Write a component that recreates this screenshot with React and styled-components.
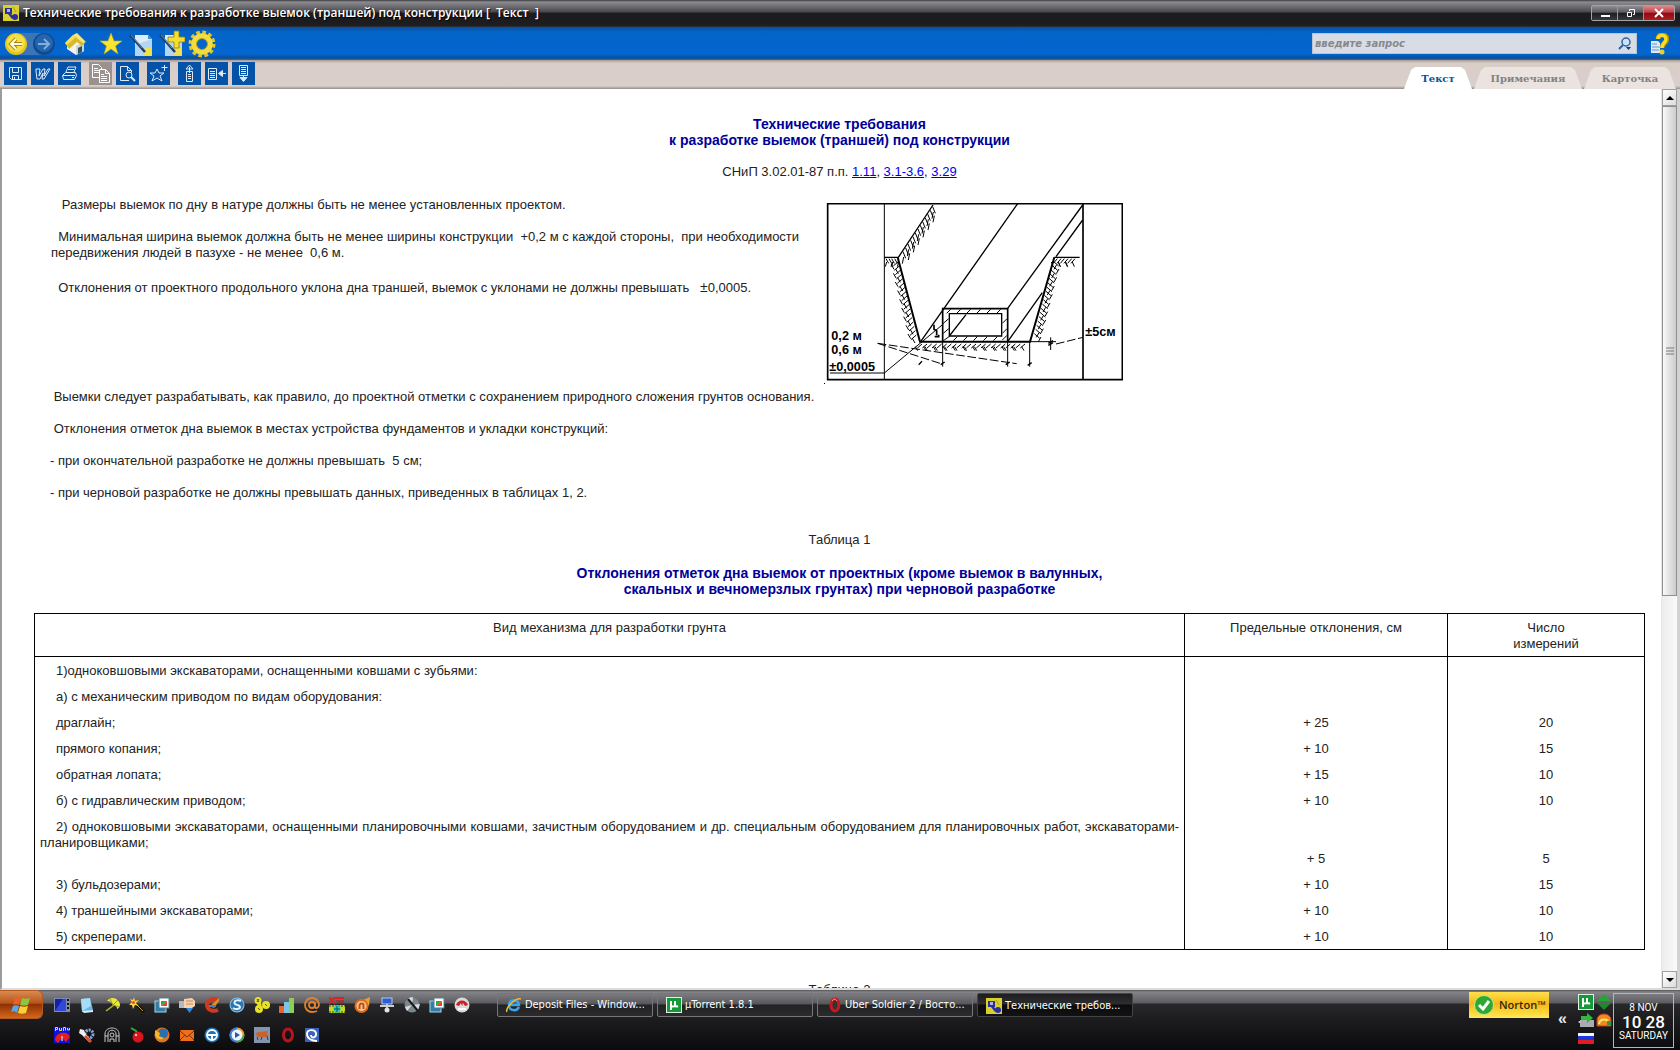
import styled, { createGlobalStyle } from "styled-components";

const GlobalStyle = createGlobalStyle`
  * {
    box-sizing: border-box;
  }

  body {
    margin: 0;
    background: #fff;
    font-family: "Liberation Sans", Arial, sans-serif;
    font-size: 13px;
    line-height: 16px;
    color: #222;
  }

  button {
    margin: 0;
    padding: 0;
    border: 0;
    background: none;
    font: inherit;
    color: inherit;
  }

  svg {
    display: block;
  }
`;

const Desktop = styled.div`
  display: flex;
  flex-direction: column;
  height: 100vh;
  overflow: hidden;
`;

const TitleBar = styled.header`
  display: flex;
  align-items: center;
  flex: none;
  height: 27px;
  padding: 0 5px 2px 3px;
  background: linear-gradient(
    #3c3c40 0,
    #8c8b90 2px,
    #6a696e 7px,
    #48474b 12px,
    #1c1c1f 13px,
    #1d1d20 25px,
    #26323f 27px
  );
`;

const Title = styled.h1`
  flex: 1;
  margin: 0 0 0 4px;
  font-family: "Open Sans", sans-serif;
  font-size: 12px;
  font-weight: 600;
  line-height: 18px;
  color: #fff;
  text-shadow: 1px 1px 1px #000;
  white-space: pre;
`;

const WindowButtons = styled.div`
  display: flex;
  border: 1px solid #a5a5a8;
  border-radius: 2px;
`;

const WindowButton = styled.button`
  display: grid;
  place-items: center;
  width: ${(props) => (props.$close ? "30px" : "26px")};
  height: 14px;
  border-right: ${(props) => (props.$close ? "0" : "1px solid #98989b")};
  background: ${(props) =>
    props.$close
      ? "linear-gradient(#d98b8b, #c04048 45%, #8e0b14 50%, #b01c22)"
      : "linear-gradient(#8f8f93, #5a5a5e 45%, #1d1d20 50%, #3a3a3d)"};
`;

const MainBar = styled.div`
  display: flex;
  align-items: center;
  flex: none;
  height: 33px;
  padding: 0 11px 0 5px;
  background: linear-gradient(#0b4f9f 0, #0363c9 5px, #0466cf 27px, #034f9f 31px, #5d6472 33px);
`;

const IconButton = styled.button`
  margin-right: ${(props) => props.$gap || 0}px;
`;

const Search = styled.form`
  display: flex;
  align-items: center;
  width: 325px;
  height: 21px;
  margin: 0 14px 0 auto;
  padding-right: 4px;
  border: 1px solid #b9c3d2;
  background: #d7dce5;
`;

const SearchInput = styled.input`
  flex: 1;
  min-width: 0;
  padding: 0 2px;
  border: 0;
  outline: 0;
  background: none;
  font-family: "DejaVu Sans", sans-serif;
  font-size: 10px;
  font-style: italic;
  font-weight: bold;

  &::placeholder {
    color: #88888e;
    opacity: 1;
  }
`;

const ToolBar = styled.div`
  display: flex;
  align-items: flex-start;
  flex: none;
  gap: 8px;
  height: 29px;
  padding: 2px 4px 0;
  background: linear-gradient(#a89792 0, #d9cdc8 3px, #d9cfcb 26px, #958b87 29px);
`;

const ToolGroup = styled.div`
  display: flex;
  gap: 4px;
`;

const ToolButton = styled.button`
  display: grid;
  place-items: center;
  width: 23px;
  height: 23px;
  background: ${(props) => (props.$gray ? "#9b918d" : "#0453a8")};
`;

const Tabs = styled.nav`
  display: flex;
  gap: 2px;
  margin: 5px 0 0 auto;
`;

const Tab = styled.button`
  width: ${(props) => props.$width}px;
  height: 22px;
  padding-top: 2px;
  clip-path: polygon(
    0 100%,
    7px 3px,
    11px 0,
    calc(100% - 11px) 0,
    calc(100% - 7px) 3px,
    100% 100%
  );
  background: ${(props) => (props.$active ? "#fff" : "#eae3e0")};
  font-family: "DejaVu Serif", serif;
  font-size: 10px;
  font-weight: bold;
  color: ${(props) => (props.$active ? "#0452a8" : "#85817f")};
`;

const Workspace = styled.div`
  display: flex;
  flex: 1;
  min-height: 0;
  padding-right: 3px;
  border-left: 2px solid #9c9c9e;
  border-bottom: 2px solid #dcdcdc;
  background: linear-gradient(90deg, #fff calc(100% - 3px), #d4d2d2 0);
`;

const Page = styled.main`
  flex: 1;
  min-width: 0;
  overflow: hidden;
  padding: 27px 16px 0 32px;
`;

const Heading = styled.h2`
  margin: 0 0 16px;
  font-size: 14px;
  line-height: 16px;
  text-align: center;
  color: #000099;
`;

const Centered = styled.p`
  margin: 0 0 17px;
  text-align: center;

  a {
    color: #0000ee;
  }
`;

const Intro = styled.section`
  display: flex;
  align-items: flex-start;
  height: 192px;
  padding-left: 17px;
`;

const IntroText = styled.div`
  flex: 0 1 773px;
`;

const Paragraph = styled.p`
  margin: 0 0 16px;
  white-space: pre-wrap;
`;

const PlusMinus = styled.span`
  font-size: 14px;
  line-height: 20px;
`;

const Figure = styled.figure`
  flex: none;
  margin: 6px 0 0;
`;

const Notes = styled.section`
  margin-bottom: 31px;
  padding-left: 16px;
`;

const Table = styled.table`
  width: 100%;
  margin: 0 0 32px;
  border-collapse: collapse;
  border: 1px solid #000;
`;

const Column = styled.col`
  width: ${(props) => props.$width};
`;

const HeadCell = styled.th`
  height: 43px;
  padding: 6px 5px 4px;
  border: 1px solid #000;
  font-weight: normal;
  vertical-align: top;
`;

const Cell = styled.td`
  padding: 6px 5px ${(props) => (props.$tall ? "20px" : "4px")};
  border-right: 1px solid #000;
  text-align: ${(props) => (props.$name ? "justify" : "center")};
  text-indent: ${(props) => (props.$name ? "16px" : "0")};
  vertical-align: bottom;
`;

const ScrollBar = styled.div`
  display: flex;
  flex-direction: column;
  width: 16px;
  border-left: 1px solid #e6e6e6;
  background: linear-gradient(90deg, #ececec, #fafafa);
`;

const ScrollButton = styled.button`
  display: grid;
  place-items: center;
  height: 17px;
  border: 1px solid #9f9f9f;
  background: linear-gradient(135deg, #fff, #dcdcdc);
`;

const ScrollTrack = styled.div`
  display: grid;
  flex: 1;
  grid-template-rows: 17fr 13fr;
`;

const ScrollThumb = styled.div`
  display: grid;
  place-items: center;
  border: 1px solid #8f8f8f;
  background: linear-gradient(90deg, #fafafa, #e6e6e6 40%, #cdcdcd);
`;

const TaskBar = styled.footer`
  display: flex;
  align-items: flex-start;
  flex: none;
  height: 60px;
  padding-right: 6px;
  background: linear-gradient(
    #55565a 0,
    #838388 2px,
    #5b5b60 13px,
    #28282b 14px,
    #1c1c1f 30px,
    #0b0b0d 60px
  );
`;

const StartButton = styled.button`
  display: grid;
  place-items: center;
  width: 43px;
  height: 29px;
  border: 1px solid #b4581c;
  border-left: 0;
  border-radius: 0 6px 6px 0;
  background: linear-gradient(#d98a50, #b9541a 45%, #8f3205 50%, #d3661a);
`;

const QuickLaunch = styled.div`
  display: grid;
  grid-template-columns: repeat(17, 25px);
  grid-auto-rows: 30px;
  margin-left: 6px;
`;

const QuickButton = styled.button`
  display: grid;
  place-items: center;
`;

const Tasks = styled.div`
  display: flex;
  flex: 1;
  gap: 4px;
  margin: 3px 20px 0 23px;
`;

const Task = styled.button`
  display: flex;
  align-items: center;
  flex: 0 1 156px;
  min-width: 0;
  gap: 3px;
  height: 24px;
  padding: ${(props) => (props.$active ? "2px 8px 0" : "0 8px")};
  border: 1px solid ${(props) => (props.$active ? "#444447" : "#77777b")};
  border-radius: 2px;
  background: ${(props) =>
    props.$active
      ? "linear-gradient(#1e1e20, #2d2d30 45%, #0c0c0d 50%, #121214)"
      : "linear-gradient(#7b7b80, #57575b 45%, #232326 50%, #2b2b2e)"};
  color: #fff;
`;

const TaskLabel = styled.span`
  overflow: hidden;
  font-family: "DejaVu Sans Condensed", "DejaVu Sans", sans-serif;
  font-size: 11px;
  white-space: nowrap;
`;

const Norton = styled.button`
  display: flex;
  align-items: center;
  gap: 5px;
  width: 80px;
  height: 26px;
  margin-top: 2px;
  padding-left: 5px;
  background: linear-gradient(#ffe04a, #f5b81c 45%, #fccf2e 70%, #ffe95c);
  font-family: "Open Sans", sans-serif;
  font-size: 11px;
  font-weight: 600;
  color: #33290a;
`;

const Expand = styled.button`
  width: 27px;
  height: 20px;
  margin-top: 19px;
  font-size: 16px;
  font-weight: bold;
  line-height: 18px;
  color: #e8e8e8;
`;

const Tray = styled.div`
  display: grid;
  grid-template-columns: 16px 16px;
  grid-auto-rows: 17px;
  gap: 1px 2px;
  margin: 4px 1px 0 2px;
`;

const Clock = styled.time`
  width: 61px;
  height: 55px;
  margin-top: 3px;
  padding-top: 8px;
  border: 1px solid #c9b690;
  font-family: "Roboto", sans-serif;
  font-size: 10px;
  line-height: 12px;
  text-align: center;
  color: #fff;
`;

const ClockDigits = styled.span`
  display: block;
  margin: 1px 0;
  font-size: 17px;
  font-weight: 500;
  line-height: 14px;
`;

const AppIcon = () => (
  <svg width="16" height="16" viewBox="0 0 16 16">
    <rect width="16" height="16" fill="#d8d02c" />
    <path d="M2 3h7v6H2z" fill="#2a2f9c" />
    <path d="M4 4h3v3H4z" fill="#aeb4d8" />
    <path d="M5 9h3l3 3-2 2z" fill="#2a2f9c" />
    <circle cx="12" cy="12" r="3" fill="#2a2f9c" />
    <path d="M10 2l3 5" stroke="#a8a020" />
  </svg>
);

const BackForward = () => (
  <svg width="52" height="26" viewBox="0 0 52 26">
    <rect x="6" y="2" width="44" height="22" rx="11" fill="#3c74b8" />
    <circle cx="11" cy="13" r="11" fill="#e6c51c" />
    <circle cx="11" cy="12" r="9" fill="#f6e04a" />
    <path d="M17 13H6m5-5l-5 5 5 5" fill="none" stroke="#a8861a" strokeWidth="4" />
    <path d="M17 13H6m5-5l-5 5 5 5" fill="none" stroke="#fffbd8" strokeWidth="2" />
    <circle cx="39" cy="13" r="11" fill="#0b4c94" />
    <circle cx="39" cy="12" r="9" fill="#2465ad" />
    <path d="M33 13h11m-5-5l5 5-5 5" fill="none" stroke="#80aede" strokeWidth="2" />
  </svg>
);

const HomeIcon = () => (
  <svg width="22" height="24" viewBox="0 0 22 24">
    <path d="M3 12l7-7 10 6v8l-8 4-9-6z" fill="#f5f4ea" />
    <path d="M12 14l8-4v9l-8 4z" fill="#c9d6da" />
    <path d="M14 16l4-2v6l-4 2z" fill="#31515e" />
    <path d="M1 11l8-8 12 8-3 3-5-4-8 7z" fill="#d8b926" />
    <path d="M9 3l4-2 9 9-3 1z" fill="#f8e574" />
    <path d="M1 11l8-8 3 2-9 8z" fill="#f4df58" />
  </svg>
);

const StarIcon = () => (
  <svg width="22" height="22" viewBox="0 0 22 22">
    <path
      d="M11 0l3 8h8l-6.500 5 2.500 8-7-5-7 5 2.500-8L0 8h8z"
      fill="#f9e52e"
      stroke="#c9a710"
      strokeWidth=".6"
    />
  </svg>
);

const NoteIcon = ({ plus }) => (
  <svg width="26" height="28" viewBox="0 0 26 28">
    <path d="M6 5h13l4 4v17H6z" fill="#dcecfa" />
    <path d="M6 15l17-6v17H6z" fill="#b5d6f3" />
    <path d="M19 5l4 4h-4z" fill="#4c86c9" />
    <path d="M16 18h6v7h-7z" fill="#f2e14a" />
    <path d="M1 5l15 17" stroke="#1d3c60" strokeWidth="2.500" />
    <path d="M2 5l11 13" stroke="#7ca0c0" strokeWidth=".8" />
    {plus && (
      <path
        d="M15 1h5v6h6v5h-6v6h-5v-6H9V7h6z"
        fill="#f7e02c"
        stroke="#927a10"
        strokeWidth=".8"
      />
    )}
  </svg>
);

const GearIcon = () => (
  <svg width="28" height="28" viewBox="0 0 28 28">
    <circle
      cx="14"
      cy="14"
      r="11.500"
      fill="none"
      stroke="#e3c626"
      strokeWidth="4"
      strokeDasharray="3.500 2.521"
    />
    <circle cx="14" cy="14" r="8" fill="none" stroke="#f2dc3e" strokeWidth="5.500" />
    <circle cx="14" cy="14" r="5.500" fill="none" stroke="#a88c18" strokeWidth=".8" />
  </svg>
);

const MagnifierIcon = () => (
  <svg width="14" height="14" viewBox="0 0 14 14">
    <circle cx="8" cy="5" r="4" fill="#cfe2f5" stroke="#2b62a8" strokeWidth="1.500" />
    <path d="M5 8l-4 4" stroke="#2b62a8" strokeWidth="2" />
    <path d="M8 10h5l-2.500 3z" fill="#123c78" />
  </svg>
);

const HelpIcon = () => (
  <svg width="18" height="22" viewBox="0 0 18 22">
    <path d="M0 8h7l2 2v10H0z" fill="#dfeaf7" />
    <path d="M1 11h5M1 14h7M1 17h7" stroke="#5f95cf" />
    <path
      d="M7 6c0-6 9-5 9 0 0 4-5 4-5 9"
      fill="none"
      stroke="#b28c08"
      strokeWidth="5"
    />
    <path
      d="M7 6c0-5 8-5 8 0 0 4-4 4-4 9"
      fill="none"
      stroke="#f8de24"
      strokeWidth="3.500"
    />
    <circle cx="11" cy="19" r="2.500" fill="#f0cf18" />
  </svg>
);

// line glyphs of the second tool bar, drawn on a 17px grid
const toolGlyphs = {
  save: (
    <>
      <path d="M2.500 2.500h12v12h-10l-2-2z" />
      <path d="M5.500 2.500v5h6v-5M5.500 14.500v-4h6v4M7.500 12v2" />
    </>
  ),
  word: <path d="M2 4h4l-1 7 4-7h2l-1 7 4-7h2l-6 10H8l1-6-3 6H3L2 6z" />,
  print: (
    <>
      <path d="M5 7l2-5h8l-2 5M1.500 10.500l3-3h10l1 3-2 4h-11zM2 10.500h12" />
      <path d="M7 4.500h6M11 12.500h2" />
    </>
  ),
  copy: (
    <g stroke="#fff">
      <path d="M.5-.5h6l3 3v10h-9zM2 3.500h4M2 5.500h5M2 7.500h5" />
      <path d="M7.500 4.500h6l4 4v9h-10z" fill="#9b918d" />
      <path d="M13.500 4.500v4h4M9 9.500h3M9 11.500h6M9 13.500h6M9 15.500h6" />
    </g>
  ),
  preview: (
    <>
      <path d="M10 15.500H1.500v-14h7l4 4v2M8.500 1.500v4h4" />
      <circle cx="10" cy="10" r="3" />
      <path d="M12 12l4 4" strokeWidth="2" />
    </>
  ),
  favorite: (
    <path d="M7 4l2 4h5l-4 3 2 5-5-3-5 3 2-5-4-3h5zM14.500 0v6M11.500 2.500h6" />
  ),
  up: <path d="M5.500 6.500h6v10h-6zM7 9.500h3M7 11.500h3M7 13.500h3M8.500 8V2M5 4l3.500-4L12 4z" />,
  side: (
    <>
      <path d="M.5 3.500h8v11h-8zM2 6.500h5M2 8.500h5M2 10.500h5M2 12.500h5M11 8.500h7" />
      <path d="M10.500 8.500l4-3v6z" fill="#dfeaf5" />
    </>
  ),
  down: (
    <>
      <path d="M4.500.5h8v10h-8zM6 2.500h5M6 4.500h5M6 6.500h5M6 8.500h5M8.500 10v4" />
      <path d="M5 12.500h7l-3.500 4z" fill="#dfeaf5" />
    </>
  ),
};

const ToolGlyph = ({ name }) => (
  <svg
    width="17"
    height="17"
    viewBox="0 0 17 17"
    fill="none"
    stroke="#dfeaf5"
    overflow="visible"
  >
    {toolGlyphs[name]}
  </svg>
);

const toolGroups = [
  ["save", "word", "print"],
  ["copy", "preview"],
  ["favorite"],
  ["up", "side", "down"],
];

const stackGlyph = (
  <>
    <rect x="1" y="4" width="11" height="11" fill="#2f7fae" stroke="#a9d5ea" />
    <rect x="5" y="1" width="10" height="10" fill="#fff" stroke="#5c7c8c" />
    <path d="M7 9V4h6z" fill="#2faa3c" />
    <path d="M7 9l6-5v5z" fill="#e2442a" />
  </>
);

const quickIcons = [
  {
    name: "Видео",
    art: (
      <>
        <rect y="1" width="16" height="14" fill="#7d8aa8" />
        <rect x="1" y="2" width="11" height="12" fill="#1420a8" />
        <path d="M1 14l8-12h3v12z" fill="#3448d8" />
        <path d="M14 2v12" stroke="#111" strokeWidth="2" strokeDasharray="2 2" />
      </>
    ),
  },
  {
    name: "Блокнот",
    art: (
      <>
        <path d="M2 2l9-1 3 12-11 2z" fill="#63b9e6" />
        <path d="M2 2l9-1 1 8-9 5z" fill="#a6dcf5" />
        <path d="M3 14l11-1v2l-9 1z" fill="#d8eef8" />
      </>
    ),
  },
  {
    name: "Зонт",
    art: (
      <>
        <path d="M10 8l-8 6" stroke="#b8b83c" strokeWidth="1.500" />
        <path d="M3 4c3-5 11-4 13 3 0 3-1 4-3 5 0-3-2-4-4-4-1-2-3-4-6-4z" fill="#e8e73e" />
        <path d="M6 2l3 6 6 2M9 8l5-5" fill="none" stroke="#97971a" />
      </>
    ),
  },
  {
    name: "Мастер",
    art: (
      <>
        <path d="M6 6l9 9" stroke="#111" strokeWidth="3" />
        <path d="M7 7l7 7" stroke="#c7a63a" />
        <path d="M5 0l1 4 4-1-3 3 3 3-4-1-2 4-1-4-3 0 3-3-2-3 3 1z" fill="#ffd93a" />
        <circle cx="4.500" cy="5.500" r="1.500" fill="#f04a2a" />
      </>
    ),
  },
  { name: "Окна", art: stackGlyph },
  {
    name: "Загрузка",
    art: (
      <>
        <path d="M0 4h6v7H0z" fill="#b3b8bd" />
        <path d="M5 2l8-1 3 3v5l-3 2H5z" fill="#f8d3ae" />
        <path d="M7 4h7M7 7h7" stroke="#c08a60" />
        <path d="M7 11h7l-3.500 5z" fill="#2e8ae0" />
      </>
    ),
  },
  {
    name: "CCleaner",
    art: (
      <>
        <path
          d="M14 4c-4-4-11-1-11 4s6 7 11 5"
          fill="none"
          stroke="#cf3a1e"
          strokeWidth="4"
        />
        <path d="M6 9l9-8v3l-5 7z" fill="#e88b2e" />
        <path d="M5 8h7v2H5z" fill="#4c7fb8" />
      </>
    ),
  },
  {
    name: "Сеть",
    art: (
      <>
        <circle cx="8" cy="8" r="7.500" fill="#8fc6e8" />
        <circle cx="8" cy="8" r="6.500" fill="#2a76b4" />
        <path
          d="M12 4c-4-2-8 0-6 3 1 1 5 1 5 3s-4 3-7 1"
          fill="none"
          stroke="#e6f4fb"
          strokeWidth="2"
        />
      </>
    ),
  },
  {
    name: "Бонусы",
    art: (
      <>
        <circle cx="4" cy="3.500" r="3.500" fill="#e8e12a" />
        <circle cx="12" cy="8" r="4" fill="#e8e12a" />
        <circle cx="5" cy="12" r="4" fill="#e8e12a" />
        <path d="M4 4l2 5" stroke="#e8e12a" strokeWidth="4" />
        <path d="M3 2l2 3M5 2L3 5M11 7l2 2M4 11l2 2" stroke="#5a5408" />
      </>
    ),
  },
  {
    name: "Статистика",
    art: (
      <>
        <rect x="0" y="9" width="5" height="7" fill="#e8632e" />
        <rect x="5" y="5" width="5" height="11" fill="#7cc4e8" />
        <rect x="10" y="1" width="5" height="15" fill="#8bd052" />
      </>
    ),
  },
  {
    name: "Почта",
    art: (
      <g fill="none" stroke="#e2812c" strokeWidth="1.800">
        <circle cx="8" cy="8" r="3" />
        <path d="M11 5v5c0 2 4 1 4-2 0-4-3-7-7-7S1 4 1 8s3 7 7 7c2 0 3 0 5-1" />
      </g>
    ),
  },
  {
    name: "Xtra",
    art: (
      <>
        <path d="M0 0l6 7M6 0L0 7M6 1h9" stroke="#e81c1c" strokeWidth="1.800" />
        <path d="M7 4h8M8 6h7" stroke="#b01414" />
        <rect y="8" width="16" height="8" fill="#c8d820" />
        <path d="M0 9h16M0 15h16" stroke="#3a4408" strokeDasharray="2 1" />
        <circle cx="8" cy="12" r="3.500" fill="#1cd4d4" />
        <path d="M8 9v6M5 12h6" stroke="#045050" />
      </>
    ),
  },
  {
    name: "Nero",
    art: (
      <>
        <path d="M9 3l7-3-1 9z" fill="#f0a030" />
        <circle cx="7.500" cy="9" r="7" fill="#e06c1a" />
        <circle cx="7.500" cy="9" r="5" fill="#f4c49a" />
        <path d="M5.500 12V8c1-2 4-2 4 0v4" fill="none" stroke="#c0500c" strokeWidth="2" />
      </>
    ),
  },
  {
    name: "Сетевое окружение",
    art: (
      <>
        <rect x="3" y="1" width="10" height="6" fill="#2a5ed8" stroke="#b8c8e8" />
        <path d="M8 7v5M1 9h14" stroke="#c8ccd4" strokeWidth="2" />
        <circle cx="8" cy="13" r="2.500" fill="#dfe3ea" />
      </>
    ),
  },
  {
    name: "Диск",
    art: (
      <>
        <circle cx="8" cy="8" r="7.500" fill="#7c868b" />
        <path d="M8 8l-4-7 5-1zM8 8l8-1-2 6zM8 8l-7 2 2 4z" fill="#d4dee2" />
        <path d="M4 2l10 12" stroke="#16181a" strokeWidth="2" />
      </>
    ),
  },
  { name: "Окна 2", art: stackGlyph },
  {
    name: "Avira",
    art: (
      <>
        <circle cx="8" cy="8" r="7.500" fill="#d9dadb" />
        <path d="M2 8c2-6 10-6 12 0l-3 1-2-3-1 3-1-3-2 3z" fill="#cf1e28" />
        <path d="M4 12h8" stroke="#fff" strokeWidth="2" />
      </>
    ),
  },
  {
    name: "Punto",
    art: (
      <>
        <rect width="16" height="16" fill="#1014d8" />
        <path d="M1 13c0-8 13-10 15-3l-4 5-4-4-4 5z" fill="#e81c1c" />
        <path d="M1.500 4V.500h2v2h-2M5.500 1v2.500h2V1M9.500 4V.500h2v3M13.500 1v2h2V1" stroke="#f2e82a" fill="none" />
        <path d="M8 9v5" stroke="#fff" />
      </>
    ),
  },
  {
    name: "Настройка",
    art: (
      <>
        <circle
          cx="10"
          cy="7"
          r="4"
          fill="none"
          stroke="#8ea4d8"
          strokeWidth="3"
          strokeDasharray="2 1"
        />
        <path d="M1 2l4 1 1 3 6 7-2 2-7-7-3-2z" fill="#f0f0f2" />
        <path d="M6 9l6 6" stroke="#d8502a" strokeWidth="3" />
      </>
    ),
  },
  {
    name: "Арка",
    art: (
      <g fill="none" stroke="#c9c9c9">
        <path d="M1 15V7c0-8 14-8 14 0v8M4 15V7c0-5 8-5 8 0v8" />
        <circle cx="8" cy="8" r="2" />
        <path d="M6 15v-3h4v3M1 9h3M12 9h3" />
      </g>
    ),
  },
  {
    name: "Вишня",
    art: (
      <>
        <path d="M2 1l5 3 2 4" fill="none" stroke="#38a838" strokeWidth="2" />
        <circle cx="9" cy="10" r="5.500" fill="#d8141c" />
        <circle cx="7" cy="8" r="1.200" fill="#ffc0c0" />
      </>
    ),
  },
  {
    name: "Firefox",
    art: (
      <>
        <circle cx="8" cy="8" r="7.500" fill="#e0761c" />
        <circle cx="9" cy="6.500" r="5" fill="#2b6fb0" />
        <path d="M1 3l5 3-1 3 5 2c-3 3-8 1-9-3z" fill="#f4b62c" />
      </>
    ),
  },
  {
    name: "Письма",
    art: (
      <>
        <rect x="1" y="3" width="14" height="11" rx="1" fill="#ee6e1c" />
        <path d="M1 4l7 6 7-6M1 13l5-5M15 13l-5-5" fill="none" stroke="#822f04" />
      </>
    ),
  },
  {
    name: "Руль",
    art: (
      <>
        <circle cx="8" cy="8" r="7.500" fill="#1b72b8" />
        <circle cx="8" cy="8" r="5" fill="none" stroke="#fff" strokeWidth="1.800" />
        <path d="M3 8h10M8 8v5" stroke="#fff" strokeWidth="2" />
      </>
    ),
  },
  {
    name: "Проигрыватель",
    art: (
      <>
        <circle cx="8" cy="8" r="7.500" fill="#e8a02c" />
        <path d="M8 .5a7.500 7.500 0 0 0 0 15z" fill="#3c78d8" />
        <path d="M8 15.500A7.500 7.500 0 0 0 15.500 8H8z" fill="#3ea848" />
        <circle cx="8" cy="8" r="5.500" fill="#eef4fb" />
        <path d="M6 5l5 3-5 3z" fill="#2858a8" />
      </>
    ),
  },
  {
    name: "Краб",
    art: (
      <>
        <rect width="16" height="16" fill="#8494ae" />
        <path d="M1 7l3-2 10-1-1 3 2 1-3 2H4z" fill="#c8632a" />
        <path d="M3 10l1 3M13 9l1 4M8 10l-1 3" stroke="#6a2c10" />
      </>
    ),
  },
  {
    name: "Opera",
    art: (
      <ellipse cx="9" cy="8" rx="4.500" ry="6" fill="none" stroke="#b8141c" strokeWidth="3" />
    ),
  },
  {
    name: "Спираль",
    art: (
      <>
        <rect x="1" y="1" width="14" height="14" fill="#3a62b8" />
        <path
          d="M13 14C7 14 3 11 3 7c0-5 8-5 9-1 1 5-5 6-5 2"
          fill="none"
          stroke="#fff"
          strokeWidth="1.800"
        />
      </>
    ),
  },
];

const SmallIcon = ({ children }) => (
  <svg width="16" height="16" viewBox="0 0 16 16">
    {children}
  </svg>
);

const WindowsFlag = () => (
  <svg width="22" height="20" viewBox="0 0 22 20">
    <path d="M5 3c2-2 4-2 6 0L9 10c-2-1-4-1-6 0z" fill="#e8602c" />
    <path d="M12 3c3 1 5 1 8 0l-2 7c-3 1-5 1-8 0z" fill="#8cc63e" />
    <path d="M3 11c2-1 4-1 6 0l-2 7c-2-2-4-2-6-1z" fill="#58a8e8" />
    <path d="M10 11c3 1 5 1 8 0l-2 7c-3 1-5 1-8 0z" fill="#fbd034" />
  </svg>
);

const IeIcon = () => (
  <SmallIcon>
    <path
      d="M13 10c-2 5-10 4-10-2s9-7 10 0H4"
      fill="none"
      stroke="#3ba4ea"
      strokeWidth="2.500"
    />
    <path d="M1 15C-1 11 10 0 15 2" fill="none" stroke="#f3bd2c" strokeWidth="1.500" />
  </SmallIcon>
);

const TorrentIcon = () => (
  <SmallIcon>
    <rect x=".5" y=".5" width="15" height="15" fill="#14983a" stroke="#dff2e0" />
    <path d="M5 13V4v4c0 2 4 2 4 0V4v4c0 1 1 2 3 1" fill="none" stroke="#fff" strokeWidth="2" />
  </SmallIcon>
);

const OperaIcon = () => (
  <SmallIcon>
    <ellipse cx="9" cy="8" rx="4" ry="6" fill="#333" stroke="#c8171e" strokeWidth="3" />
    <path d="M6 4c2-3 4-2 5 0" fill="none" stroke="#f4a0a0" />
  </SmallIcon>
);

const tasks = [
  { label: "Deposit Files - Window...", icon: <IeIcon /> },
  { label: "µTorrent 1.8.1", icon: <TorrentIcon /> },
  { label: "Uber Soldier 2 / Восто...", icon: <OperaIcon /> },
  { label: "Технические требов...", icon: <AppIcon />, active: true },
];

const rows = [
  { name: "1)одноковшовыми экскаваторами, оснащенными ковшами с зубьями:" },
  { name: "а) с механическим приводом по видам оборудования:" },
  { name: "драглайн;", limit: "+ 25", count: 20 },
  { name: "прямого копания;", limit: "+ 10", count: 15 },
  { name: "обратная лопата;", limit: "+ 15", count: 10 },
  { name: "б) с гидравлическим приводом;", limit: "+ 10", count: 10 },
  {
    name: "2) одноковшовыми экскаваторами, оснащенными планировочными ковшами, зачистным оборудованием и др. специальным оборудованием для планировочных работ, экскаваторами-планировщиками;",
    limit: "+ 5",
    count: 5,
    tall: true,
  },
  { name: "3) бульдозерами;", limit: "+ 10", count: 15 },
  { name: "4) траншейными экскаваторами;", limit: "+ 10", count: 10 },
  { name: "5) скреперами.", limit: "+ 10", count: 10 },
];

// short strokes of soil along a line from (x1, y1) to (x2, y2)
const soil = (x1, y1, x2, y2, count, dx, dy) =>
  Array.from({ length: count }, (_, i) => {
    const x = Math.round(x1 + ((x2 - x1) * i) / count);
    const y = Math.round(y1 + ((y2 - y1) * i) / count);
    return `M${x} ${y}l${dx} ${dy}m${i % 2 ? 4 : -6} -4l${-dx / 2} ${dy}`;
  }).join("");

const TrenchDrawing = () => (
  <svg width="299" height="182" viewBox="42 39 897 546" role="img" aria-label="Траншея">
    <g fill="none" stroke="#000" strokeWidth="4">
      <path d="M53 41H937V569H53z" strokeWidth="5" />
      <path d="M819 41V569" strokeWidth="5" />
      <path d="M223 41V569M60 549H223L400 402" strokeWidth="3" />
      <path d="M369 45L265 202M332 455L623 41M593 355L818 45M738 200L818 90M593 455L697 308M418 438L468 374" />
      <path d="M223 202H265M733 202H809" strokeWidth="4" />
      <path d="M263 202L330 455H660L733 202" strokeWidth="6" />
      <path d="M398 455V356H593V455" strokeWidth="5" />
      <path d="M418 371H575V438H418z" />
      <path d="M398 455V530M593 455V530M659 455V530M660 455H738M722 442V480" strokeWidth="3" />
      <path d="M203 460L390 520M203 460L620 521M738 462L819 442" strokeWidth="3" strokeDasharray="26 8" />
      <path d="M326 524l10-10M392 524l12-8M587 524l12-8M653 526l12-8M715 460l14-8M715 466l14-8" />
      <path d="M372 404v14l8 4v14M374 440h12v-6" strokeWidth="5" />
    </g>
    <rect x="42" y="579" width="3" height="3" />
    <g fill="none" stroke="#000" strokeWidth="3">
      <path d={soil(368, 50, 272, 196, 13, 8, 20)} />
      <path d={soil(266, 214, 322, 448, 18, -16, 14)} />
      <path d={soil(730, 214, 670, 444, 18, 16, 14)} />
      <path d={soil(336, 462, 660, 462, 22, -14, 12)} />
      <path d={soil(228, 206, 262, 206, 4, 8, 14)} />
      <path d={soil(742, 206, 806, 206, 6, -12, 14)} />
      <path d="M410 370l12-12M440 370l12-12M470 370l12-12M500 370l12-12M530 370l12-12M560 370l12-12M400 400l16-14M400 430l16-14M400 452l20-14M430 452l12-12M460 452l12-12M490 452l12-12M520 452l12-12M550 452l12-12M577 400l14-14M577 430l14-14M577 450l14-14" />
    </g>
    <g fontFamily="Liberation Sans, Arial, sans-serif" fontWeight="bold" fontSize="38">
      <text x="64" y="450">0,2 м</text>
      <text x="64" y="491">0,6 м</text>
      <text x="58" y="542">±0,0005</text>
      <text x="826" y="438">±5см</text>
    </g>
  </svg>
);

export default function App() {
  return (
    <Desktop>
      <GlobalStyle />
      <TitleBar>
        <AppIcon />
        <Title>Технические требования к разработке выемок (траншей) под конструкции [  Текст  ]</Title>
        <WindowButtons>
          <WindowButton aria-label="Свернуть">
            <svg width="10" height="10">
              <path d="M1 8h9" stroke="#fff" strokeWidth="2" />
            </svg>
          </WindowButton>
          <WindowButton aria-label="Восстановить">
            <svg width="10" height="10" fill="none" stroke="#fff">
              <path d="M3.500 3V1.500h5v5H7M1.500 4.500h4v4h-4z" />
            </svg>
          </WindowButton>
          <WindowButton $close aria-label="Закрыть">
            <svg width="10" height="10">
              <path d="M1 1l8 8M9 1L1 9" stroke="#fff" strokeWidth="2" />
            </svg>
          </WindowButton>
        </WindowButtons>
      </TitleBar>

      <MainBar>
        <IconButton $gap={7} aria-label="Назад и вперед">
          <BackForward />
        </IconButton>
        <IconButton $gap={14} aria-label="Домой">
          <HomeIcon />
        </IconButton>
        <IconButton $gap={7} aria-label="Избранное">
          <StarIcon />
        </IconButton>
        <IconButton $gap={4} aria-label="Заметка">
          <NoteIcon />
        </IconButton>
        <IconButton $gap={3} aria-label="Новая заметка">
          <NoteIcon plus />
        </IconButton>
        <IconButton aria-label="Настройки">
          <GearIcon />
        </IconButton>
        <Search>
          <SearchInput placeholder="введите запрос" aria-label="Запрос" />
          <IconButton type="button" aria-label="Найти">
            <MagnifierIcon />
          </IconButton>
        </Search>
        <IconButton aria-label="Справка">
          <HelpIcon />
        </IconButton>
      </MainBar>

      <ToolBar>
        {toolGroups.map((group) => (
          <ToolGroup key={group[0]}>
            {group.map((name) => (
              <ToolButton key={name} $gray={name === "copy"} aria-label={name}>
                <ToolGlyph name={name} />
              </ToolButton>
            ))}
          </ToolGroup>
        ))}
        <Tabs>
          <Tab $active $width={68}>Текст</Tab>
          <Tab $width={108}>Примечания</Tab>
          <Tab $width={92}>Карточка</Tab>
        </Tabs>
      </ToolBar>

      <Workspace>
        <Page>
          <Heading>
            Технические требования
            <br />к разработке выемок (траншей) под конструкции
          </Heading>
          <Centered>
            СНиП 3.02.01-87 п.п. <a href="#p111">1.11</a>, <a href="#p31">3.1-3.6</a>,{" "}
            <a href="#p329">3.29</a>
          </Centered>
          <Intro>
            <IntroText>
              <Paragraph>{"   Размеры выемок по дну в натуре должны быть не менее установленных проектом."}</Paragraph>
              <Paragraph>
                {"  Минимальная ширина выемок должна быть не менее ширины конструкции  +0,2 м с каждой стороны,  при необходимости передвижения людей в пазухе - не менее  0,6 м."}
              </Paragraph>
              <Paragraph>
                {"  Отклонения от проектного продольного уклона дна траншей, выемок с уклонами не должны превышать   "}
                <PlusMinus>±</PlusMinus>0,0005.
              </Paragraph>
            </IntroText>
            <Figure>
              <TrenchDrawing />
            </Figure>
          </Intro>
          <Notes>
            <Paragraph>{" Выемки следует разрабатывать, как правило, до проектной отметки с сохранением природного сложения грунтов основания."}</Paragraph>
            <Paragraph>{" Отклонения отметок дна выемок в местах устройства фундаментов и укладки конструкций:"}</Paragraph>
            <Paragraph>{"- при окончательной разработке не должны превышать  5 см;"}</Paragraph>
            <Paragraph>{"- при черновой разработке не должны превышать данных, приведенных в таблицах 1, 2."}</Paragraph>
          </Notes>
          <Centered>Таблица 1</Centered>
          <Heading>
            Отклонения отметок дна выемок от проектных (кроме выемок в валунных,
            <br />
            скальных и вечномерзлых грунтах) при черновой разработке
          </Heading>
          <Table>
            <colgroup>
              <Column />
              <Column $width="263px" />
              <Column $width="197px" />
            </colgroup>
            <thead>
              <tr>
                <HeadCell>Вид механизма для разработки грунта</HeadCell>
                <HeadCell>Предельные отклонения, см</HeadCell>
                <HeadCell>
                  Число
                  <br />
                  измерений
                </HeadCell>
              </tr>
            </thead>
            <tbody>
              {rows.map((row) => (
                <tr key={row.name}>
                  <Cell $name $tall={row.tall}>
                    {row.name}
                  </Cell>
                  <Cell>{row.limit}</Cell>
                  <Cell>{row.count}</Cell>
                </tr>
              ))}
            </tbody>
          </Table>
          <Centered>Таблица 2</Centered>
        </Page>
        <ScrollBar>
          <ScrollButton aria-label="Вверх">
            <svg width="8" height="4">
              <path d="M0 4h8L4 0z" />
            </svg>
          </ScrollButton>
          <ScrollTrack>
            <ScrollThumb>
              <svg width="8" height="8">
                <path d="M0 1h8M0 4h8M0 7h8" stroke="#777" />
              </svg>
            </ScrollThumb>
          </ScrollTrack>
          <ScrollButton aria-label="Вниз">
            <svg width="8" height="4">
              <path d="M0 0h8L4 4z" />
            </svg>
          </ScrollButton>
        </ScrollBar>
      </Workspace>

      <TaskBar>
        <StartButton aria-label="Пуск">
          <WindowsFlag />
        </StartButton>
        <QuickLaunch>
          {quickIcons.map((icon) => (
            <QuickButton key={icon.name} aria-label={icon.name}>
              <SmallIcon>{icon.art}</SmallIcon>
            </QuickButton>
          ))}
        </QuickLaunch>
        <Tasks>
          {tasks.map((task) => (
            <Task key={task.label} $active={task.active}>
              {task.icon}
              <TaskLabel>{task.label}</TaskLabel>
            </Task>
          ))}
        </Tasks>
        <Norton>
          <svg width="20" height="20" viewBox="0 0 20 20">
            <circle cx="10" cy="10" r="9.500" fill="#2fa82f" stroke="#bfe89a" />
            <path d="M5 10l4 4 6-8" fill="none" stroke="#fff" strokeWidth="3" />
          </svg>
          Norton™
        </Norton>
        <Expand aria-label="Показать значки">«</Expand>
        <Tray>
          <TorrentIcon />
          <SmallIcon>
            <path d="M8 0l7 7H1z" fill="#27a436" />
            <path d="M8 16l7-7H1z" fill="#1b8a28" />
          </SmallIcon>
          <SmallIcon>
            <path d="M2 8h14v7H2z" fill="#a9adb0" />
            <path d="M3 4h6V1l6 5-6 5V8H3z" fill="#2fb83c" />
            <circle cx="1.500" cy="10" r="1" fill="#ddd" />
          </SmallIcon>
          <SmallIcon>
            <path d="M1 14V8c0-8 14-8 14 0v6z" fill="#f08a1c" stroke="#c0392b" />
            <path d="M3 12c1-6 9-6 10 0" fill="none" stroke="#ffe27a" strokeWidth="2" />
            <rect x="11" y="9" width="4" height="4" fill="#2c9a34" />
          </SmallIcon>
          <SmallIcon>
            <rect y="3" width="16" height="4" fill="#f4f4f6" />
            <rect y="6" width="16" height="4" fill="#1c38d8" />
            <rect y="10" width="16" height="4" fill="#e01c24" />
          </SmallIcon>
        </Tray>
        <Clock>
          8 NOV
          <ClockDigits>10 28</ClockDigits>
          SATURDAY
        </Clock>
      </TaskBar>
    </Desktop>
  );
}
